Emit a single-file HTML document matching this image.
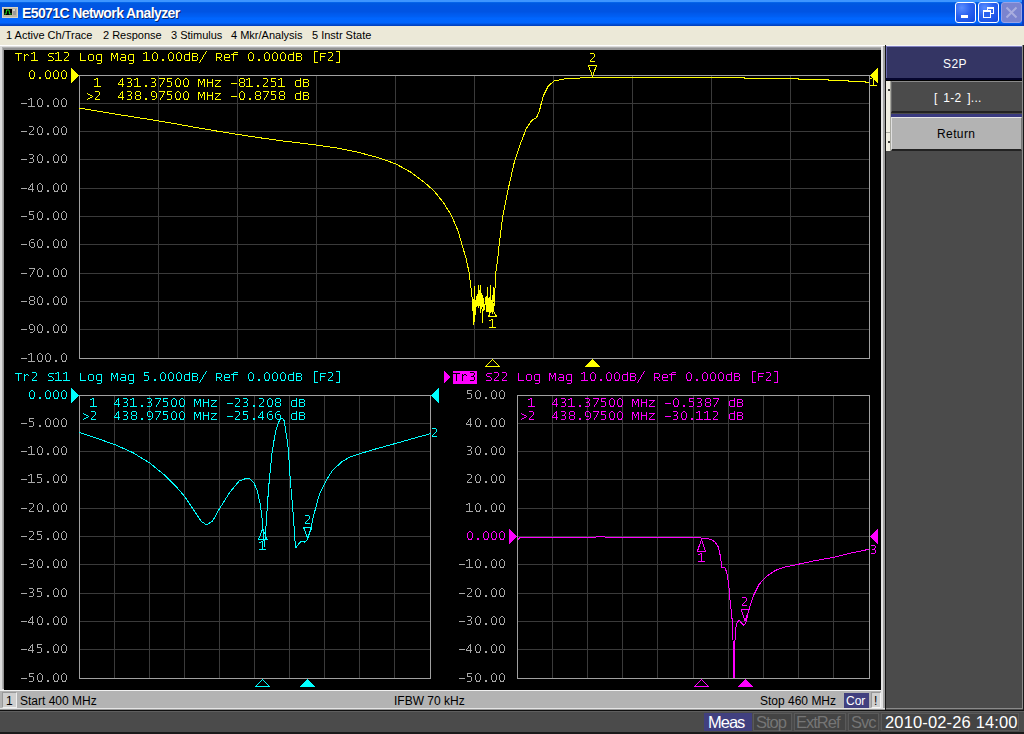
<!DOCTYPE html>
<html><head><meta charset="utf-8"><style>
html,body{margin:0;padding:0;}
body{width:1024px;height:734px;overflow:hidden;position:relative;background:#ece9d8;font-family:"Liberation Sans",sans-serif;}
.abs{position:absolute;}
#title{left:0;top:0;width:1024px;height:26px;background:linear-gradient(to bottom,#3d95ff 0px,#3d95ff 2px,#0a6ef5 2px,#005ae0 3px,#0054e3 7px,#0054e3 12px,#0058ea 13px,#0060f5 17px,#0066ff 18px,#0064fc 23px,#0052dc 24px,#003cb8 26px);}
#ttext{left:22px;top:5px;font-weight:bold;font-size:14px;letter-spacing:-0.6px;color:#fff;text-shadow:1px 1px 0 #0a246a;white-space:pre;line-height:16px;}
.tbtn{top:2px;width:19px;height:19px;border:1px solid #fff;border-radius:3px;background:radial-gradient(circle at 30% 25%,#5a8dff 0%,#2a62f0 45%,#1048e0 100%);}
#menu{left:0;top:26px;width:1024px;height:19px;background:#ece9d8;font-size:11px;color:#000;}
#menu span{position:absolute;top:3px;white-space:pre;line-height:13px;}
.sb{font-size:12px;color:#000;white-space:pre;line-height:14px;}
.is{font-size:16.5px;white-space:pre;line-height:18px;}
.ls{letter-spacing:-1px;}
</style></head><body>
<div id="title" class="abs"></div>
<svg class="abs" style="left:2px;top:7px" width="16" height="11" viewBox="0 0 16 11">
<rect x="0" y="0" width="16" height="11" fill="#bdb6a4"/><rect x="0.5" y="0.5" width="15" height="10" fill="none" stroke="#d8d2c0"/>
<rect x="2" y="2" width="8" height="6" fill="#000"/><polyline points="2.5,7 4,7 4.5,3 7,3 7.5,7 9.5,7" fill="none" stroke="#20e020" stroke-width="1"/>
<rect x="11" y="2" width="3" height="6" fill="#9a9a9a"/><rect x="11.5" y="2" width="1" height="2" fill="#fff"/>
</svg>
<div id="ttext" class="abs">E5071C Network Analyzer</div>
<div class="abs tbtn" style="left:955px"><div class="abs" style="left:5px;top:12px;width:7px;height:3px;background:#fff"></div></div>
<div class="abs tbtn" style="left:978px"><div class="abs" style="left:8px;top:4px;width:5px;height:4px;border:1px solid #fff;border-top-width:2px"></div><div class="abs" style="left:4px;top:7px;width:6px;height:5px;border:1px solid #fff;border-top-width:2px;background:#2a62f0"></div></div>
<div class="abs" style="left:1001px;top:2px;width:21px;height:21px;border-radius:3px;background:#7b84cf;border:1px solid #98a2e6;box-sizing:border-box"><svg class="abs" style="left:0;top:0" width="19" height="19"><path d="M4.5 4.5 L14.5 14.5 M14.5 4.5 L4.5 14.5" stroke="#a9addf" stroke-width="2"/></svg></div><div class="abs" style="left:1022px;top:0;width:2px;height:26px;background:#0a3cc0"></div>
<div id="menu" class="abs">
<span style="left:6px">1 Active Ch/Trace</span><span style="left:103px">2 Response</span><span style="left:171px">3 Stimulus</span><span style="left:231px">4 Mkr/Analysis</span><span style="left:312px">5 Instr State</span>
</div>
<!-- chart frame -->
<div class="abs" style="left:0;top:45px;width:886px;height:646px;background:#fff"></div>
<div class="abs" style="left:0;top:46px;width:885px;height:644px;background:#dcdcdc"></div>
<div class="abs" style="left:2px;top:47px;width:882px;height:642px;background:#b0b0b0"></div>
<div class="abs" style="left:3px;top:48px;width:880px;height:641px;background:#939393"></div>
<div class="abs" style="left:881px;top:46px;width:2px;height:662px;background:#e4e4e4"></div>
<div class="abs" style="left:883px;top:46px;width:2px;height:663px;background:#a0a0a0"></div>
<div class="abs" style="left:885px;top:45px;width:1px;height:666px;background:#141414"></div>
<div class="abs" style="left:4px;top:50px;width:877px;height:640px;background:#000"></div>
<svg class="abs" style="left:0;top:0" width="1024" height="734"><defs><path id="g0" d="M3 -8h2v1h-2zM2 -7h1v1h-1zM5 -7h1v1h-1zM1 -6h1v1h-1zM6 -6h1v1h-1zM1 -5h1v1h-1zM6 -5h1v1h-1zM1 -4h1v1h-1zM6 -4h1v1h-1zM1 -3h1v1h-1zM6 -3h1v1h-1zM1 -2h1v1h-1zM6 -2h1v1h-1zM2 -1h1v1h-1zM5 -1h1v1h-1zM2 0h4v1h-4z"/><path id="g1" d="M2 -8h2v1h-2zM0 -7h2v1h-2zM3 -7h1v1h-1zM3 -6h1v1h-1zM3 -5h1v1h-1zM3 -4h1v1h-1zM3 -3h1v1h-1zM3 -2h1v1h-1zM3 -1h1v1h-1zM0 0h7v1h-7z"/><path id="g2" d="M1 -8h4v1h-4zM5 -7h1v1h-1zM5 -6h1v1h-1zM5 -5h1v1h-1zM4 -4h1v1h-1zM3 -3h1v1h-1zM2 -2h1v1h-1zM1 -1h1v1h-1zM1 0h5v1h-5z"/><path id="g3" d="M1 -8h4v1h-4zM5 -7h1v1h-1zM5 -6h1v1h-1zM4 -5h1v1h-1zM2 -4h3v1h-3zM5 -3h1v1h-1zM5 -2h1v1h-1zM5 -1h1v1h-1zM1 0h4v1h-4z"/><path id="g4" d="M4 -8h1v1h-1zM3 -7h2v1h-2zM2 -6h1v1h-1zM4 -6h1v1h-1zM2 -5h1v1h-1zM4 -5h1v1h-1zM1 -4h1v1h-1zM4 -4h1v1h-1zM0 -3h1v1h-1zM4 -3h1v1h-1zM0 -2h6v1h-6zM4 -1h1v1h-1zM4 0h1v1h-1z"/><path id="g5" d="M1 -8h5v1h-5zM1 -7h1v1h-1zM1 -6h1v1h-1zM1 -5h4v1h-4zM5 -4h1v1h-1zM5 -3h1v1h-1zM5 -2h1v1h-1zM5 -1h1v1h-1zM1 0h4v1h-4z"/><path id="g6" d="M3 -8h3v1h-3zM2 -7h1v1h-1zM1 -6h1v1h-1zM1 -5h1v1h-1zM3 -5h3v1h-3zM1 -4h1v1h-1zM6 -4h1v1h-1zM1 -3h1v1h-1zM6 -3h1v1h-1zM1 -2h1v1h-1zM6 -2h1v1h-1zM2 -1h1v1h-1zM6 -1h1v1h-1zM3 0h3v1h-3z"/><path id="g7" d="M1 -8h6v1h-6zM6 -7h1v1h-1zM5 -6h1v1h-1zM5 -5h1v1h-1zM4 -4h1v1h-1zM4 -3h1v1h-1zM3 -2h1v1h-1zM2 -1h1v1h-1zM2 0h1v1h-1z"/><path id="g8" d="M2 -8h4v1h-4zM1 -7h1v1h-1zM6 -7h1v1h-1zM1 -6h1v1h-1zM6 -6h1v1h-1zM1 -5h1v1h-1zM6 -5h1v1h-1zM2 -4h4v1h-4zM1 -3h1v1h-1zM6 -3h1v1h-1zM1 -2h1v1h-1zM6 -2h1v1h-1zM1 -1h1v1h-1zM6 -1h1v1h-1zM2 0h4v1h-4z"/><path id="g9" d="M2 -8h3v1h-3zM1 -7h1v1h-1zM5 -7h1v1h-1zM1 -6h1v1h-1zM6 -6h1v1h-1zM1 -5h1v1h-1zM6 -5h1v1h-1zM1 -4h1v1h-1zM6 -4h1v1h-1zM2 -3h3v1h-3zM6 -3h1v1h-1zM6 -2h1v1h-1zM5 -1h1v1h-1zM2 0h3v1h-3z"/><path id="g_46" d="M3 -1h2v1h-2zM3 0h2v1h-2z"/><path id="g_45" d="M1 -3h6v1h-6z"/><path id="g_47" d="M7 -9h1v1h-1zM6 -8h1v1h-1zM6 -7h1v1h-1zM5 -6h1v1h-1zM4 -5h1v1h-1zM4 -4h1v1h-1zM3 -3h1v1h-1zM3 -2h1v1h-1zM2 -1h1v1h-1zM1 0h1v1h-1zM1 1h1v1h-1zM0 2h1v1h-1z"/><path id="g_62" d="M1 -6h1v1h-1zM2 -5h2v1h-2zM4 -4h2v1h-2zM6 -3h1v1h-1zM4 -2h2v1h-2zM2 -1h2v1h-2zM1 0h1v1h-1z"/><path id="g_91" d="M3 -9h4v1h-4zM3 -8h1v1h-1zM3 -7h1v1h-1zM3 -6h1v1h-1zM3 -5h1v1h-1zM3 -4h1v1h-1zM3 -3h1v1h-1zM3 -2h1v1h-1zM3 -1h1v1h-1zM3 0h1v1h-1zM3 1h1v1h-1zM3 2h4v1h-4z"/><path id="g_93" d="M1 -9h4v1h-4zM4 -8h1v1h-1zM4 -7h1v1h-1zM4 -6h1v1h-1zM4 -5h1v1h-1zM4 -4h1v1h-1zM4 -3h1v1h-1zM4 -2h1v1h-1zM4 -1h1v1h-1zM4 0h1v1h-1zM4 1h1v1h-1zM1 2h4v1h-4z"/><path id="gB" d="M1 -7h5v1h-5zM1 -6h1v1h-1zM6 -6h1v1h-1zM1 -5h1v1h-1zM6 -5h1v1h-1zM1 -4h5v1h-5zM1 -3h1v1h-1zM6 -3h1v1h-1zM1 -2h1v1h-1zM6 -2h1v1h-1zM1 -1h1v1h-1zM6 -1h1v1h-1zM1 0h5v1h-5z"/><path id="gF" d="M1 -7h6v1h-6zM1 -6h1v1h-1zM1 -5h1v1h-1zM1 -4h5v1h-5zM1 -3h1v1h-1zM1 -2h1v1h-1zM1 -1h1v1h-1zM1 0h1v1h-1z"/><path id="gH" d="M1 -7h1v1h-1zM6 -7h1v1h-1zM1 -6h1v1h-1zM6 -6h1v1h-1zM1 -5h1v1h-1zM6 -5h1v1h-1zM1 -4h6v1h-6zM1 -3h1v1h-1zM6 -3h1v1h-1zM1 -2h1v1h-1zM6 -2h1v1h-1zM1 -1h1v1h-1zM6 -1h1v1h-1zM1 0h1v1h-1zM6 0h1v1h-1z"/><path id="gL" d="M1 -7h1v1h-1zM1 -6h1v1h-1zM1 -5h1v1h-1zM1 -4h1v1h-1zM1 -3h1v1h-1zM1 -2h1v1h-1zM1 -1h1v1h-1zM1 0h6v1h-6z"/><path id="gM" d="M0 -7h2v1h-2zM5 -7h2v1h-2zM0 -6h2v1h-2zM5 -6h2v1h-2zM0 -5h1v1h-1zM2 -5h1v1h-1zM4 -5h1v1h-1zM6 -5h1v1h-1zM0 -4h1v1h-1zM2 -4h1v1h-1zM4 -4h1v1h-1zM6 -4h1v1h-1zM0 -3h1v1h-1zM3 -3h1v1h-1zM6 -3h1v1h-1zM0 -2h1v1h-1zM3 -2h1v1h-1zM6 -2h1v1h-1zM0 -1h1v1h-1zM6 -1h1v1h-1zM0 0h1v1h-1zM6 0h1v1h-1z"/><path id="gR" d="M1 -7h5v1h-5zM1 -6h1v1h-1zM6 -6h1v1h-1zM1 -5h1v1h-1zM6 -5h1v1h-1zM1 -4h1v1h-1zM6 -4h1v1h-1zM1 -3h5v1h-5zM1 -2h1v1h-1zM4 -2h1v1h-1zM1 -1h1v1h-1zM5 -1h1v1h-1zM1 0h1v1h-1zM6 0h1v1h-1z"/><path id="gS" d="M2 -7h5v1h-5zM1 -6h1v1h-1zM1 -5h1v1h-1zM2 -4h3v1h-3zM5 -3h1v1h-1zM6 -2h1v1h-1zM6 -1h1v1h-1zM1 0h5v1h-5z"/><path id="gT" d="M0 -7h7v1h-7zM3 -6h1v1h-1zM3 -5h1v1h-1zM3 -4h1v1h-1zM3 -3h1v1h-1zM3 -2h1v1h-1zM3 -1h1v1h-1zM3 0h1v1h-1z"/><path id="ga" d="M2 -6h4v1h-4zM6 -5h1v1h-1zM6 -4h1v1h-1zM2 -3h5v1h-5zM1 -2h1v1h-1zM6 -2h1v1h-1zM1 -1h1v1h-1zM6 -1h1v1h-1zM2 0h5v1h-5z"/><path id="gd" d="M6 -8h1v1h-1zM6 -7h1v1h-1zM2 -6h5v1h-5zM1 -5h1v1h-1zM6 -5h1v1h-1zM1 -4h1v1h-1zM6 -4h1v1h-1zM1 -3h1v1h-1zM6 -3h1v1h-1zM1 -2h1v1h-1zM6 -2h1v1h-1zM1 -1h1v1h-1zM6 -1h1v1h-1zM2 0h5v1h-5z"/><path id="ge" d="M2 -6h4v1h-4zM1 -5h1v1h-1zM6 -5h1v1h-1zM1 -4h1v1h-1zM6 -4h1v1h-1zM1 -3h6v1h-6zM1 -2h1v1h-1zM1 -1h1v1h-1zM2 0h5v1h-5z"/><path id="gf" d="M3 -8h4v1h-4zM2 -7h1v1h-1zM0 -6h7v1h-7zM2 -5h1v1h-1zM2 -4h1v1h-1zM2 -3h1v1h-1zM2 -2h1v1h-1zM2 -1h1v1h-1zM2 0h1v1h-1z"/><path id="gg" d="M2 -6h5v1h-5zM1 -5h1v1h-1zM6 -5h1v1h-1zM1 -4h1v1h-1zM6 -4h1v1h-1zM1 -3h1v1h-1zM6 -3h1v1h-1zM1 -2h1v1h-1zM6 -2h1v1h-1zM1 -1h1v1h-1zM6 -1h1v1h-1zM2 0h5v1h-5zM6 1h1v1h-1zM6 2h1v1h-1zM2 3h4v1h-4z"/><path id="go" d="M2 -6h4v1h-4zM1 -5h1v1h-1zM6 -5h1v1h-1zM1 -4h1v1h-1zM6 -4h1v1h-1zM1 -3h1v1h-1zM6 -3h1v1h-1zM1 -2h1v1h-1zM6 -2h1v1h-1zM1 -1h1v1h-1zM6 -1h1v1h-1zM2 0h4v1h-4z"/><path id="gr" d="M1 -6h1v1h-1zM3 -6h2v1h-2zM1 -5h2v1h-2zM5 -5h1v1h-1zM1 -4h1v1h-1zM1 -3h1v1h-1zM1 -2h1v1h-1zM1 -1h1v1h-1zM1 0h1v1h-1z"/><path id="gz" d="M1 -6h6v1h-6zM5 -5h1v1h-1zM4 -4h1v1h-1zM3 -3h1v1h-1zM2 -2h1v1h-1zM1 -1h1v1h-1zM1 0h6v1h-6z"/></defs><g shape-rendering="crispEdges"><g stroke="#3a3a3a" stroke-width="1"><line x1="158.5" y1="75" x2="158.5" y2="358"/><line x1="237.5" y1="75" x2="237.5" y2="358"/><line x1="316.5" y1="75" x2="316.5" y2="358"/><line x1="395.5" y1="75" x2="395.5" y2="358"/><line x1="474.5" y1="75" x2="474.5" y2="358"/><line x1="553.5" y1="75" x2="553.5" y2="358"/><line x1="632.5" y1="75" x2="632.5" y2="358"/><line x1="711.5" y1="75" x2="711.5" y2="358"/><line x1="790.5" y1="75" x2="790.5" y2="358"/><line x1="79" y1="103.5" x2="869" y2="103.5"/><line x1="79" y1="131.5" x2="869" y2="131.5"/><line x1="79" y1="159.5" x2="869" y2="159.5"/><line x1="79" y1="188.5" x2="869" y2="188.5"/><line x1="79" y1="216.5" x2="869" y2="216.5"/><line x1="79" y1="244.5" x2="869" y2="244.5"/><line x1="79" y1="273.5" x2="869" y2="273.5"/><line x1="79" y1="301.5" x2="869" y2="301.5"/><line x1="79" y1="329.5" x2="869" y2="329.5"/></g><rect x="79.5" y="75.5" width="790" height="283" fill="none" stroke="#a0a0a0" stroke-width="1"/><g fill="#ffff00"><use href="#gT" x="15" y="60"/><use href="#gr" x="23" y="60"/><use href="#g1" x="31" y="60"/><use href="#gS" x="47" y="60"/><use href="#g1" x="55" y="60"/><use href="#g2" x="63" y="60"/><use href="#gL" x="79" y="60"/><use href="#go" x="87" y="60"/><use href="#gg" x="95" y="60"/><use href="#gM" x="111" y="60"/><use href="#ga" x="119" y="60"/><use href="#gg" x="127" y="60"/><use href="#g1" x="143" y="60"/><use href="#g0" x="151" y="60"/><use href="#g_46" x="159" y="60"/><use href="#g0" x="167" y="60"/><use href="#g0" x="175" y="60"/><use href="#gd" x="183" y="60"/><use href="#gB" x="191" y="60"/><use href="#g_47" x="199" y="60"/><use href="#gR" x="215" y="60"/><use href="#ge" x="223" y="60"/><use href="#gf" x="231" y="60"/><use href="#g0" x="247" y="60"/><use href="#g_46" x="255" y="60"/><use href="#g0" x="263" y="60"/><use href="#g0" x="271" y="60"/><use href="#g0" x="279" y="60"/><use href="#gd" x="287" y="60"/><use href="#gB" x="295" y="60"/><use href="#g_91" x="311" y="60"/><use href="#gF" x="319" y="60"/><use href="#g2" x="327" y="60"/><use href="#g_93" x="335" y="60"/></g><g fill="#ffff00"><use href="#g0" x="28" y="78"/><use href="#g_46" x="36" y="78"/><use href="#g0" x="44" y="78"/><use href="#g0" x="52" y="78"/><use href="#g0" x="60" y="78"/></g><g fill="#a8a8a8"><use href="#g_45" x="20" y="106"/><use href="#g1" x="28" y="106"/><use href="#g0" x="36" y="106"/><use href="#g_46" x="44" y="106"/><use href="#g0" x="52" y="106"/><use href="#g0" x="60" y="106"/></g><g fill="#a8a8a8"><use href="#g_45" x="20" y="134"/><use href="#g2" x="28" y="134"/><use href="#g0" x="36" y="134"/><use href="#g_46" x="44" y="134"/><use href="#g0" x="52" y="134"/><use href="#g0" x="60" y="134"/></g><g fill="#a8a8a8"><use href="#g_45" x="20" y="162"/><use href="#g3" x="28" y="162"/><use href="#g0" x="36" y="162"/><use href="#g_46" x="44" y="162"/><use href="#g0" x="52" y="162"/><use href="#g0" x="60" y="162"/></g><g fill="#a8a8a8"><use href="#g_45" x="20" y="191"/><use href="#g4" x="28" y="191"/><use href="#g0" x="36" y="191"/><use href="#g_46" x="44" y="191"/><use href="#g0" x="52" y="191"/><use href="#g0" x="60" y="191"/></g><g fill="#a8a8a8"><use href="#g_45" x="20" y="219"/><use href="#g5" x="28" y="219"/><use href="#g0" x="36" y="219"/><use href="#g_46" x="44" y="219"/><use href="#g0" x="52" y="219"/><use href="#g0" x="60" y="219"/></g><g fill="#a8a8a8"><use href="#g_45" x="20" y="247"/><use href="#g6" x="28" y="247"/><use href="#g0" x="36" y="247"/><use href="#g_46" x="44" y="247"/><use href="#g0" x="52" y="247"/><use href="#g0" x="60" y="247"/></g><g fill="#a8a8a8"><use href="#g_45" x="20" y="276"/><use href="#g7" x="28" y="276"/><use href="#g0" x="36" y="276"/><use href="#g_46" x="44" y="276"/><use href="#g0" x="52" y="276"/><use href="#g0" x="60" y="276"/></g><g fill="#a8a8a8"><use href="#g_45" x="20" y="304"/><use href="#g8" x="28" y="304"/><use href="#g0" x="36" y="304"/><use href="#g_46" x="44" y="304"/><use href="#g0" x="52" y="304"/><use href="#g0" x="60" y="304"/></g><g fill="#a8a8a8"><use href="#g_45" x="20" y="332"/><use href="#g9" x="28" y="332"/><use href="#g0" x="36" y="332"/><use href="#g_46" x="44" y="332"/><use href="#g0" x="52" y="332"/><use href="#g0" x="60" y="332"/></g><g fill="#a8a8a8"><use href="#g_45" x="20" y="361"/><use href="#g1" x="28" y="361"/><use href="#g0" x="36" y="361"/><use href="#g0" x="44" y="361"/><use href="#g_46" x="52" y="361"/><use href="#g0" x="60" y="361"/></g><g fill="#ffff00"><use href="#g1" x="94" y="86"/><use href="#g4" x="118" y="86"/><use href="#g3" x="126" y="86"/><use href="#g1" x="134" y="86"/><use href="#g_46" x="142" y="86"/><use href="#g3" x="150" y="86"/><use href="#g7" x="158" y="86"/><use href="#g5" x="166" y="86"/><use href="#g0" x="174" y="86"/><use href="#g0" x="182" y="86"/><use href="#gM" x="198" y="86"/><use href="#gH" x="206" y="86"/><use href="#gz" x="214" y="86"/><use href="#g_45" x="230" y="86"/><use href="#g8" x="238" y="86"/><use href="#g1" x="246" y="86"/><use href="#g_46" x="254" y="86"/><use href="#g2" x="262" y="86"/><use href="#g5" x="270" y="86"/><use href="#g1" x="278" y="86"/><use href="#gd" x="294" y="86"/><use href="#gB" x="302" y="86"/></g><g fill="#ffff00"><use href="#g_62" x="86" y="99"/><use href="#g2" x="94" y="99"/><use href="#g4" x="118" y="99"/><use href="#g3" x="126" y="99"/><use href="#g8" x="134" y="99"/><use href="#g_46" x="142" y="99"/><use href="#g9" x="150" y="99"/><use href="#g7" x="158" y="99"/><use href="#g5" x="166" y="99"/><use href="#g0" x="174" y="99"/><use href="#g0" x="182" y="99"/><use href="#gM" x="198" y="99"/><use href="#gH" x="206" y="99"/><use href="#gz" x="214" y="99"/><use href="#g_45" x="230" y="99"/><use href="#g0" x="238" y="99"/><use href="#g_46" x="246" y="99"/><use href="#g8" x="254" y="99"/><use href="#g7" x="262" y="99"/><use href="#g5" x="270" y="99"/><use href="#g8" x="278" y="99"/><use href="#gd" x="294" y="99"/><use href="#gB" x="302" y="99"/></g><polyline points="79,108 100,111.5 120,114.8 140,118 158,120.75 180,124.6 200,128.2 220,131.6 237,134.25 260,137.8 280,140.6 300,143 316,145 337,148 358.5,152.4 379.7,158.1 395.6,163.8 410.8,172.2 423.9,182 433.7,190.5 443.5,202.7 451.6,215.8 458.2,231.3 463.1,248.5 466,258 469.1,272.7 471.3,290.6 472.5,301 473.5,306 474,324.6 474.2,286 475,315.4 475.6,300 476.5,306 477,296 477.6,304 478.4,285 478.8,307.6 479.5,294 480.5,286 480.5,312.6 481.3,298 482,309 482.5,322.5 483.5,300 484.5,310 485.5,298 486.5,312 487.3,287 487.8,312 488.5,299 489.2,314 490.5,286 491,310 491.8,300 492.5,308 493.3,287 494.2,306 495.7,272.7 497.7,259 499.7,240 502.9,215.4 508.1,189.5 514.6,161 519.8,145.4 526.3,128.6 531.4,120.8 536.6,117.5 539.2,111.8 543.1,96.3 548.3,85.9 554.7,80.7 567.7,78.4 579.8,78.4 580.5,77.5 744.8,77.5 744.8,78.5 798.4,78.5 798.4,79.5 828.3,79.5 828.3,80.5 848.5,80.5 848.5,81.5 865.2,81.5 865.2,82.5 869,82.5" fill="none" stroke="#ffff00" stroke-width="1" stroke-linejoin="round" shape-rendering="crispEdges"/><g fill="#ffff00" shape-rendering="crispEdges"><polygon points="472,301 473,298 474,300 475.5,301 476,306 475.5,312 474,313 473,312 472,311"/><polygon points="476.3,300 477.5,295 478.4,291 480.5,290.5 482,294 483.7,298 483.7,306 482,308 480,307 478.4,305 477,306 476.3,308"/><polygon points="488,303 489.5,299 491,300 493,301 494,305 494,311 492.5,314 491,311 489,313 488,310"/></g><polygon points="492.3,308.5 488.5,316.5 496.5,316.5" fill="none" stroke="#ffff00" stroke-width="1" shape-rendering="crispEdges"/><g fill="#ffff00"><use href="#g1" x="489" y="327"/></g><polygon points="588.5,65.5 596.5,65.5 592.5,76.5" fill="none" stroke="#ffff00" stroke-width="1" shape-rendering="crispEdges"/><g fill="#ffff00"><use href="#g2" x="589" y="61"/></g><polygon points="71,68 79,75.5 71,83" fill="#ffff00"/><polygon points="878,68 870,75.5 878,83" fill="#ffff00"/><g fill="#ffff00"><use href="#g1" x="870" y="85"/></g><polygon points="492.5,359.5 485.5,366.5 499.5,366.5" fill="none" stroke="#ffff00" stroke-width="1" shape-rendering="crispEdges"/><polygon points="592.5,359 585,367 600,367" fill="#ffff00"/><g stroke="#3a3a3a" stroke-width="1"><line x1="114.5" y1="395" x2="114.5" y2="678"/><line x1="149.5" y1="395" x2="149.5" y2="678"/><line x1="184.5" y1="395" x2="184.5" y2="678"/><line x1="219.5" y1="395" x2="219.5" y2="678"/><line x1="254.5" y1="395" x2="254.5" y2="678"/><line x1="289.5" y1="395" x2="289.5" y2="678"/><line x1="324.5" y1="395" x2="324.5" y2="678"/><line x1="359.5" y1="395" x2="359.5" y2="678"/><line x1="394.5" y1="395" x2="394.5" y2="678"/><line x1="79" y1="423.5" x2="430" y2="423.5"/><line x1="79" y1="451.5" x2="430" y2="451.5"/><line x1="79" y1="479.5" x2="430" y2="479.5"/><line x1="79" y1="508.5" x2="430" y2="508.5"/><line x1="79" y1="536.5" x2="430" y2="536.5"/><line x1="79" y1="564.5" x2="430" y2="564.5"/><line x1="79" y1="593.5" x2="430" y2="593.5"/><line x1="79" y1="621.5" x2="430" y2="621.5"/><line x1="79" y1="649.5" x2="430" y2="649.5"/></g><rect x="79.5" y="395.5" width="351" height="283" fill="none" stroke="#a0a0a0" stroke-width="1"/><g fill="#00ffff"><use href="#gT" x="15" y="380"/><use href="#gr" x="23" y="380"/><use href="#g2" x="31" y="380"/><use href="#gS" x="47" y="380"/><use href="#g1" x="55" y="380"/><use href="#g1" x="63" y="380"/><use href="#gL" x="79" y="380"/><use href="#go" x="87" y="380"/><use href="#gg" x="95" y="380"/><use href="#gM" x="111" y="380"/><use href="#ga" x="119" y="380"/><use href="#gg" x="127" y="380"/><use href="#g5" x="143" y="380"/><use href="#g_46" x="151" y="380"/><use href="#g0" x="159" y="380"/><use href="#g0" x="167" y="380"/><use href="#g0" x="175" y="380"/><use href="#gd" x="183" y="380"/><use href="#gB" x="191" y="380"/><use href="#g_47" x="199" y="380"/><use href="#gR" x="215" y="380"/><use href="#ge" x="223" y="380"/><use href="#gf" x="231" y="380"/><use href="#g0" x="247" y="380"/><use href="#g_46" x="255" y="380"/><use href="#g0" x="263" y="380"/><use href="#g0" x="271" y="380"/><use href="#g0" x="279" y="380"/><use href="#gd" x="287" y="380"/><use href="#gB" x="295" y="380"/><use href="#g_91" x="311" y="380"/><use href="#gF" x="319" y="380"/><use href="#g2" x="327" y="380"/><use href="#g_93" x="335" y="380"/></g><g fill="#00ffff"><use href="#g0" x="28" y="398"/><use href="#g_46" x="36" y="398"/><use href="#g0" x="44" y="398"/><use href="#g0" x="52" y="398"/><use href="#g0" x="60" y="398"/></g><g fill="#a8a8a8"><use href="#g_45" x="20" y="426"/><use href="#g5" x="28" y="426"/><use href="#g_46" x="36" y="426"/><use href="#g0" x="44" y="426"/><use href="#g0" x="52" y="426"/><use href="#g0" x="60" y="426"/></g><g fill="#a8a8a8"><use href="#g_45" x="20" y="454"/><use href="#g1" x="28" y="454"/><use href="#g0" x="36" y="454"/><use href="#g_46" x="44" y="454"/><use href="#g0" x="52" y="454"/><use href="#g0" x="60" y="454"/></g><g fill="#a8a8a8"><use href="#g_45" x="20" y="482"/><use href="#g1" x="28" y="482"/><use href="#g5" x="36" y="482"/><use href="#g_46" x="44" y="482"/><use href="#g0" x="52" y="482"/><use href="#g0" x="60" y="482"/></g><g fill="#a8a8a8"><use href="#g_45" x="20" y="511"/><use href="#g2" x="28" y="511"/><use href="#g0" x="36" y="511"/><use href="#g_46" x="44" y="511"/><use href="#g0" x="52" y="511"/><use href="#g0" x="60" y="511"/></g><g fill="#a8a8a8"><use href="#g_45" x="20" y="539"/><use href="#g2" x="28" y="539"/><use href="#g5" x="36" y="539"/><use href="#g_46" x="44" y="539"/><use href="#g0" x="52" y="539"/><use href="#g0" x="60" y="539"/></g><g fill="#a8a8a8"><use href="#g_45" x="20" y="567"/><use href="#g3" x="28" y="567"/><use href="#g0" x="36" y="567"/><use href="#g_46" x="44" y="567"/><use href="#g0" x="52" y="567"/><use href="#g0" x="60" y="567"/></g><g fill="#a8a8a8"><use href="#g_45" x="20" y="596"/><use href="#g3" x="28" y="596"/><use href="#g5" x="36" y="596"/><use href="#g_46" x="44" y="596"/><use href="#g0" x="52" y="596"/><use href="#g0" x="60" y="596"/></g><g fill="#a8a8a8"><use href="#g_45" x="20" y="624"/><use href="#g4" x="28" y="624"/><use href="#g0" x="36" y="624"/><use href="#g_46" x="44" y="624"/><use href="#g0" x="52" y="624"/><use href="#g0" x="60" y="624"/></g><g fill="#a8a8a8"><use href="#g_45" x="20" y="652"/><use href="#g4" x="28" y="652"/><use href="#g5" x="36" y="652"/><use href="#g_46" x="44" y="652"/><use href="#g0" x="52" y="652"/><use href="#g0" x="60" y="652"/></g><g fill="#a8a8a8"><use href="#g_45" x="20" y="681"/><use href="#g5" x="28" y="681"/><use href="#g0" x="36" y="681"/><use href="#g_46" x="44" y="681"/><use href="#g0" x="52" y="681"/><use href="#g0" x="60" y="681"/></g><g fill="#00ffff"><use href="#g1" x="90" y="406"/><use href="#g4" x="114" y="406"/><use href="#g3" x="122" y="406"/><use href="#g1" x="130" y="406"/><use href="#g_46" x="138" y="406"/><use href="#g3" x="146" y="406"/><use href="#g7" x="154" y="406"/><use href="#g5" x="162" y="406"/><use href="#g0" x="170" y="406"/><use href="#g0" x="178" y="406"/><use href="#gM" x="194" y="406"/><use href="#gH" x="202" y="406"/><use href="#gz" x="210" y="406"/><use href="#g_45" x="226" y="406"/><use href="#g2" x="234" y="406"/><use href="#g3" x="242" y="406"/><use href="#g_46" x="250" y="406"/><use href="#g2" x="258" y="406"/><use href="#g0" x="266" y="406"/><use href="#g8" x="274" y="406"/><use href="#gd" x="290" y="406"/><use href="#gB" x="298" y="406"/></g><g fill="#00ffff"><use href="#g_62" x="82" y="419"/><use href="#g2" x="90" y="419"/><use href="#g4" x="114" y="419"/><use href="#g3" x="122" y="419"/><use href="#g8" x="130" y="419"/><use href="#g_46" x="138" y="419"/><use href="#g9" x="146" y="419"/><use href="#g7" x="154" y="419"/><use href="#g5" x="162" y="419"/><use href="#g0" x="170" y="419"/><use href="#g0" x="178" y="419"/><use href="#gM" x="194" y="419"/><use href="#gH" x="202" y="419"/><use href="#gz" x="210" y="419"/><use href="#g_45" x="226" y="419"/><use href="#g2" x="234" y="419"/><use href="#g5" x="242" y="419"/><use href="#g_46" x="250" y="419"/><use href="#g4" x="258" y="419"/><use href="#g6" x="266" y="419"/><use href="#g6" x="274" y="419"/><use href="#gd" x="290" y="419"/><use href="#gB" x="298" y="419"/></g><polyline points="79,432.4 96.2,438.1 114.3,444.4 132.4,452.4 149.6,462.9 164.8,475.3 176.3,486.7 184.5,496.3 193.4,509.6 201,521.1 206.4,524.9 212.5,521.1 219.5,508.7 229.6,492.5 239.2,481 246.8,478.2 249.3,478.6 253.6,482.3 257.3,490.9 260.3,504.4 262.2,519.1 263.4,533.8 264.4,546.1 265.2,538.7 266.5,519.1 267.7,500.7 268.9,484.7 270.3,470 272,453.3 273.6,442.7 276,430.4 279.3,420.6 282.2,418.2 284.2,420.6 285.8,431.2 287.5,442.7 288.7,453.3 289.5,470 291,488.4 292.9,510.5 294.1,527.7 294.7,538.7 295.9,547.9 299,543.6 301.4,541.2 304.5,542.1 307.6,539.3 310,531.3 313.7,515.4 318.6,497 320,493.1 327,479 332.5,470.4 341.9,461.7 349.8,457 359.2,453.9 374.8,449.2 394.7,443.7 414,438.2 430.7,433.6" fill="none" stroke="#00ffff" stroke-width="1" stroke-linejoin="round" shape-rendering="crispEdges"/><polygon points="262.8,528.5 258.5,539.5 267,539.5" fill="none" stroke="#00ffff" stroke-width="1" shape-rendering="crispEdges"/><g fill="#00ffff"><use href="#g1" x="259" y="549"/></g><polygon points="303.5,527 312,527 307.6,538" fill="none" stroke="#00ffff" stroke-width="1" shape-rendering="crispEdges"/><g fill="#00ffff"><use href="#g2" x="304" y="523"/></g><polygon points="71,388 79,395.5 71,403" fill="#00ffff"/><polygon points="439,388 431,395.5 439,403" fill="#00ffff"/><g fill="#00ffff"><use href="#g2" x="431" y="436"/></g><polygon points="262.5,679.5 255.5,686.5 269.5,686.5" fill="none" stroke="#00ffff" stroke-width="1" shape-rendering="crispEdges"/><polygon points="307.5,679 300,687 315,687" fill="#00ffff"/><g stroke="#3a3a3a" stroke-width="1"><line x1="552.5" y1="395" x2="552.5" y2="678"/><line x1="587.5" y1="395" x2="587.5" y2="678"/><line x1="622.5" y1="395" x2="622.5" y2="678"/><line x1="657.5" y1="395" x2="657.5" y2="678"/><line x1="693.5" y1="395" x2="693.5" y2="678"/><line x1="728.5" y1="395" x2="728.5" y2="678"/><line x1="763.5" y1="395" x2="763.5" y2="678"/><line x1="798.5" y1="395" x2="798.5" y2="678"/><line x1="833.5" y1="395" x2="833.5" y2="678"/><line x1="517" y1="423.5" x2="869" y2="423.5"/><line x1="517" y1="451.5" x2="869" y2="451.5"/><line x1="517" y1="479.5" x2="869" y2="479.5"/><line x1="517" y1="508.5" x2="869" y2="508.5"/><line x1="517" y1="536.5" x2="869" y2="536.5"/><line x1="517" y1="564.5" x2="869" y2="564.5"/><line x1="517" y1="593.5" x2="869" y2="593.5"/><line x1="517" y1="621.5" x2="869" y2="621.5"/><line x1="517" y1="649.5" x2="869" y2="649.5"/></g><rect x="517.5" y="395.5" width="352" height="283" fill="none" stroke="#a0a0a0" stroke-width="1"/><polygon points="444,371 450.5,377 444,383" fill="#ff00ff"/><rect x="453" y="371" width="24" height="13" fill="#ff00ff"/><g fill="#000"><use href="#gT" x="453" y="380"/><use href="#gr" x="461" y="380"/><use href="#g3" x="469" y="380"/></g><g fill="#ff00ff"><use href="#gS" x="485" y="380"/><use href="#g2" x="493" y="380"/><use href="#g2" x="501" y="380"/><use href="#gL" x="517" y="380"/><use href="#go" x="525" y="380"/><use href="#gg" x="533" y="380"/><use href="#gM" x="549" y="380"/><use href="#ga" x="557" y="380"/><use href="#gg" x="565" y="380"/><use href="#g1" x="581" y="380"/><use href="#g0" x="589" y="380"/><use href="#g_46" x="597" y="380"/><use href="#g0" x="605" y="380"/><use href="#g0" x="613" y="380"/><use href="#gd" x="621" y="380"/><use href="#gB" x="629" y="380"/><use href="#g_47" x="637" y="380"/><use href="#gR" x="653" y="380"/><use href="#ge" x="661" y="380"/><use href="#gf" x="669" y="380"/><use href="#g0" x="685" y="380"/><use href="#g_46" x="693" y="380"/><use href="#g0" x="701" y="380"/><use href="#g0" x="709" y="380"/><use href="#g0" x="717" y="380"/><use href="#gd" x="725" y="380"/><use href="#gB" x="733" y="380"/><use href="#g_91" x="749" y="380"/><use href="#gF" x="757" y="380"/><use href="#g2" x="765" y="380"/><use href="#g_93" x="773" y="380"/></g><g fill="#a8a8a8"><use href="#g5" x="466" y="398"/><use href="#g0" x="474" y="398"/><use href="#g_46" x="482" y="398"/><use href="#g0" x="490" y="398"/><use href="#g0" x="498" y="398"/></g><g fill="#a8a8a8"><use href="#g4" x="466" y="426"/><use href="#g0" x="474" y="426"/><use href="#g_46" x="482" y="426"/><use href="#g0" x="490" y="426"/><use href="#g0" x="498" y="426"/></g><g fill="#a8a8a8"><use href="#g3" x="466" y="454"/><use href="#g0" x="474" y="454"/><use href="#g_46" x="482" y="454"/><use href="#g0" x="490" y="454"/><use href="#g0" x="498" y="454"/></g><g fill="#a8a8a8"><use href="#g2" x="466" y="482"/><use href="#g0" x="474" y="482"/><use href="#g_46" x="482" y="482"/><use href="#g0" x="490" y="482"/><use href="#g0" x="498" y="482"/></g><g fill="#a8a8a8"><use href="#g1" x="466" y="511"/><use href="#g0" x="474" y="511"/><use href="#g_46" x="482" y="511"/><use href="#g0" x="490" y="511"/><use href="#g0" x="498" y="511"/></g><g fill="#ff00ff"><use href="#g0" x="466" y="539"/><use href="#g_46" x="474" y="539"/><use href="#g0" x="482" y="539"/><use href="#g0" x="490" y="539"/><use href="#g0" x="498" y="539"/></g><g fill="#a8a8a8"><use href="#g_45" x="458" y="567"/><use href="#g1" x="466" y="567"/><use href="#g0" x="474" y="567"/><use href="#g_46" x="482" y="567"/><use href="#g0" x="490" y="567"/><use href="#g0" x="498" y="567"/></g><g fill="#a8a8a8"><use href="#g_45" x="458" y="596"/><use href="#g2" x="466" y="596"/><use href="#g0" x="474" y="596"/><use href="#g_46" x="482" y="596"/><use href="#g0" x="490" y="596"/><use href="#g0" x="498" y="596"/></g><g fill="#a8a8a8"><use href="#g_45" x="458" y="624"/><use href="#g3" x="466" y="624"/><use href="#g0" x="474" y="624"/><use href="#g_46" x="482" y="624"/><use href="#g0" x="490" y="624"/><use href="#g0" x="498" y="624"/></g><g fill="#a8a8a8"><use href="#g_45" x="458" y="652"/><use href="#g4" x="466" y="652"/><use href="#g0" x="474" y="652"/><use href="#g_46" x="482" y="652"/><use href="#g0" x="490" y="652"/><use href="#g0" x="498" y="652"/></g><g fill="#a8a8a8"><use href="#g_45" x="458" y="681"/><use href="#g5" x="466" y="681"/><use href="#g0" x="474" y="681"/><use href="#g_46" x="482" y="681"/><use href="#g0" x="490" y="681"/><use href="#g0" x="498" y="681"/></g><g fill="#ff00ff"><use href="#g1" x="528" y="406"/><use href="#g4" x="552" y="406"/><use href="#g3" x="560" y="406"/><use href="#g1" x="568" y="406"/><use href="#g_46" x="576" y="406"/><use href="#g3" x="584" y="406"/><use href="#g7" x="592" y="406"/><use href="#g5" x="600" y="406"/><use href="#g0" x="608" y="406"/><use href="#g0" x="616" y="406"/><use href="#gM" x="632" y="406"/><use href="#gH" x="640" y="406"/><use href="#gz" x="648" y="406"/><use href="#g_45" x="664" y="406"/><use href="#g0" x="672" y="406"/><use href="#g_46" x="680" y="406"/><use href="#g5" x="688" y="406"/><use href="#g3" x="696" y="406"/><use href="#g8" x="704" y="406"/><use href="#g7" x="712" y="406"/><use href="#gd" x="728" y="406"/><use href="#gB" x="736" y="406"/></g><g fill="#ff00ff"><use href="#g_62" x="520" y="419"/><use href="#g2" x="528" y="419"/><use href="#g4" x="552" y="419"/><use href="#g3" x="560" y="419"/><use href="#g8" x="568" y="419"/><use href="#g_46" x="576" y="419"/><use href="#g9" x="584" y="419"/><use href="#g7" x="592" y="419"/><use href="#g5" x="600" y="419"/><use href="#g0" x="608" y="419"/><use href="#g0" x="616" y="419"/><use href="#gM" x="632" y="419"/><use href="#gH" x="640" y="419"/><use href="#gz" x="648" y="419"/><use href="#g_45" x="664" y="419"/><use href="#g3" x="672" y="419"/><use href="#g0" x="680" y="419"/><use href="#g_46" x="688" y="419"/><use href="#g1" x="696" y="419"/><use href="#g1" x="704" y="419"/><use href="#g2" x="712" y="419"/><use href="#gd" x="728" y="419"/><use href="#gB" x="736" y="419"/></g><polyline points="518,539.5 520,537.6 595,537.6 596,536.8 605,536.8 606,537.6 700.5,537.6 701.9,538.6 707.6,538.6 711.5,539.5 715.3,542.4 718.1,546.7 719.6,551.9 721,560.5 722,567.7 724.8,567.7 726.7,572 728.6,583.4 730,600 730.9,607.7 732.3,621.3 733,640.4 733.6,678 734.2,678 735,640.4 735.7,628.2 737,622.7 739.1,620 741.8,623.4 743.9,625.4 745.9,622.7 748.6,610.4 749.5,607.9 753.2,596.2 759,584.5 766.4,576.4 775.2,570.5 784,567.2 798.6,564.2 813.2,561 833.5,557.4 851.3,553 868.9,549.3" fill="none" stroke="#ff00ff" stroke-width="1" stroke-linejoin="round" shape-rendering="crispEdges"/><line x1="733.8" y1="641" x2="733.8" y2="678" stroke="#ff00ff" stroke-width="2.2"/><polygon points="701.4,539.5 697.5,551 705.5,551" fill="none" stroke="#ff00ff" stroke-width="1" shape-rendering="crispEdges"/><g fill="#ff00ff"><use href="#g1" x="698" y="561"/></g><polygon points="741,609 749.5,609 745,620.5" fill="none" stroke="#ff00ff" stroke-width="1" shape-rendering="crispEdges"/><g fill="#ff00ff"><use href="#g2" x="741" y="605"/></g><polygon points="509,528.5 517,536.5 509,544.5" fill="#ff00ff"/><polygon points="878,528.5 870,536.5 878,544.5" fill="#ff00ff"/><g fill="#ff00ff"><use href="#g3" x="870" y="553"/></g><polygon points="701.5,679.5 694.5,686.5 708.5,686.5" fill="none" stroke="#ff00ff" stroke-width="1" shape-rendering="crispEdges"/><polygon points="745.5,679 738,687 753,687" fill="#ff00ff"/></g></svg>
<!-- channel status bar -->
<div class="abs" style="left:0;top:690px;width:881px;height:18px;background:#b3b3b3;border-top:1px solid #f0f0f0;box-sizing:border-box"></div>
<div class="abs" style="left:0;top:708px;width:885px;height:1px;background:#e4e4e4"></div>
<div class="abs" style="left:0;top:709px;width:885px;height:1px;background:#9a9a9a"></div>
<div class="abs" style="left:2px;top:692px;width:15px;height:16px;background:#cfcfcf;border-top:1px solid #999;border-left:1px solid #999;border-bottom:1px solid #eee;border-right:1px solid #eee;box-sizing:border-box"></div>
<div class="abs sb" style="left:6px;top:694px">1</div>
<div class="abs sb" style="left:20px;top:694px">Start 400 MHz</div>
<div class="abs sb" style="left:394px;top:694px">IFBW 70 kHz</div>
<div class="abs sb" style="left:760px;top:694px">Stop 460 MHz</div>
<div class="abs" style="left:844px;top:693px;width:25px;height:15px;background:#41407f"></div>
<div class="abs sb" style="left:846px;top:694px;color:#fff">Cor</div>
<div class="abs" style="left:871px;top:692px;width:10px;height:16px;background:#d0d0d0;border-top:1px solid #999;border-left:1px solid #999;border-bottom:1px solid #f4f4f4;border-right:1px solid #f4f4f4;box-sizing:border-box"></div>
<div class="abs sb" style="left:874px;top:694px">!</div>
<!-- right softkey panel -->
<div class="abs" style="left:886px;top:45px;width:138px;height:666px;background:#4b4b4b"></div><div class="abs" style="left:886px;top:45px;width:136px;height:1px;background:#f4f4f4"></div>
<div class="abs" style="left:886px;top:708px;width:137px;height:1px;background:#8a8a8a"></div>
<div class="abs" style="left:1022px;top:45px;width:1px;height:664px;background:#8a8a8a"></div>
<div class="abs" style="left:1023px;top:45px;width:1px;height:666px;background:#1a1a1a"></div>
<div class="abs" style="left:886px;top:46px;width:136px;height:32px;background:#343564;border-top:1px solid #8080c0;border-left:1px solid #6a6ab0;box-sizing:border-box"></div>
<div class="abs" style="left:886px;top:78px;width:136px;height:2px;background:#05052e"></div><div class="abs" style="left:886px;top:80px;width:136px;height:1px;background:#000"></div>
<div class="abs sb" style="left:943px;top:57px;color:#fff;letter-spacing:0.4px">S2P</div>
<div class="abs" style="left:886px;top:81px;width:5px;height:70px;background:#f0eee2;border-right:1px solid #a8a8a0;box-sizing:border-box"></div><div class="abs" style="left:888px;top:89px;width:2px;height:2px;background:#000;border-radius:1px"></div><div class="abs" style="left:886px;top:132px;width:4px;height:1px;background:#a8a8a0"></div><div class="abs" style="left:888px;top:141px;width:2px;height:2px;background:#000;border-radius:1px"></div>
<div class="abs" style="left:891px;top:81px;width:131px;height:32px;background:#4b4b4b;border-top:1px solid #8a8a8a;border-left:1px solid #6a6a6a;border-bottom:2px solid #222;box-sizing:border-box"></div>
<div class="abs sb" style="left:934px;top:91px;color:#fff;letter-spacing:0.3px;word-spacing:2px">[ 1-2 ]...</div>
<div class="abs" style="left:891px;top:114px;width:131px;height:3px;background:#3a3a80"></div>
<div class="abs" style="left:891px;top:117px;width:131px;height:34px;background:#b3b3b3;border-top:1px solid #e8e8e8;border-left:1px solid #e0e0e0;border-bottom:2px solid #222;border-right:1px solid #777;box-sizing:border-box"></div>
<div class="abs sb" style="left:937px;top:127px;letter-spacing:0.4px">Return</div>
<!-- instrument status bar -->
<div class="abs" style="left:0;top:710px;width:1024px;height:24px;background:#4b4b4b;border-top:1px solid #101010;box-sizing:border-box"></div>
<div class="abs" style="left:0;top:711px;width:1024px;height:1px;background:#5e5e5e"></div>
<div class="abs" style="left:0;top:732px;width:1024px;height:2px;background:#1a1a1a"></div>
<div class="abs" style="left:704px;top:713px;width:48px;height:18px;background:#41407f"></div>
<div class="abs is ls" style="left:708px;top:713px;color:#fff">Meas</div>
<div class="abs" style="left:753px;top:713px;width:39px;height:18px;background:#444;border:1px solid #5a5a5a;box-sizing:border-box"></div>
<div class="abs is ls" style="left:756px;top:713px;color:#757575">Stop</div>
<div class="abs" style="left:794px;top:713px;width:52px;height:18px;background:#444;border:1px solid #5a5a5a;box-sizing:border-box"></div>
<div class="abs is ls" style="left:796px;top:713px;color:#757575">ExtRef</div>
<div class="abs" style="left:848px;top:713px;width:31px;height:18px;background:#444;border:1px solid #5a5a5a;box-sizing:border-box"></div>
<div class="abs is ls" style="left:851px;top:713px;color:#757575">Svc</div>
<div class="abs" style="left:881px;top:713px;width:138px;height:18px;background:#444;border:1px solid #5a5a5a;box-sizing:border-box"></div>
<div class="abs is" style="left:885px;top:713px;color:#fff;letter-spacing:0.15px">2010-02-26 14:00</div>
</body></html>
